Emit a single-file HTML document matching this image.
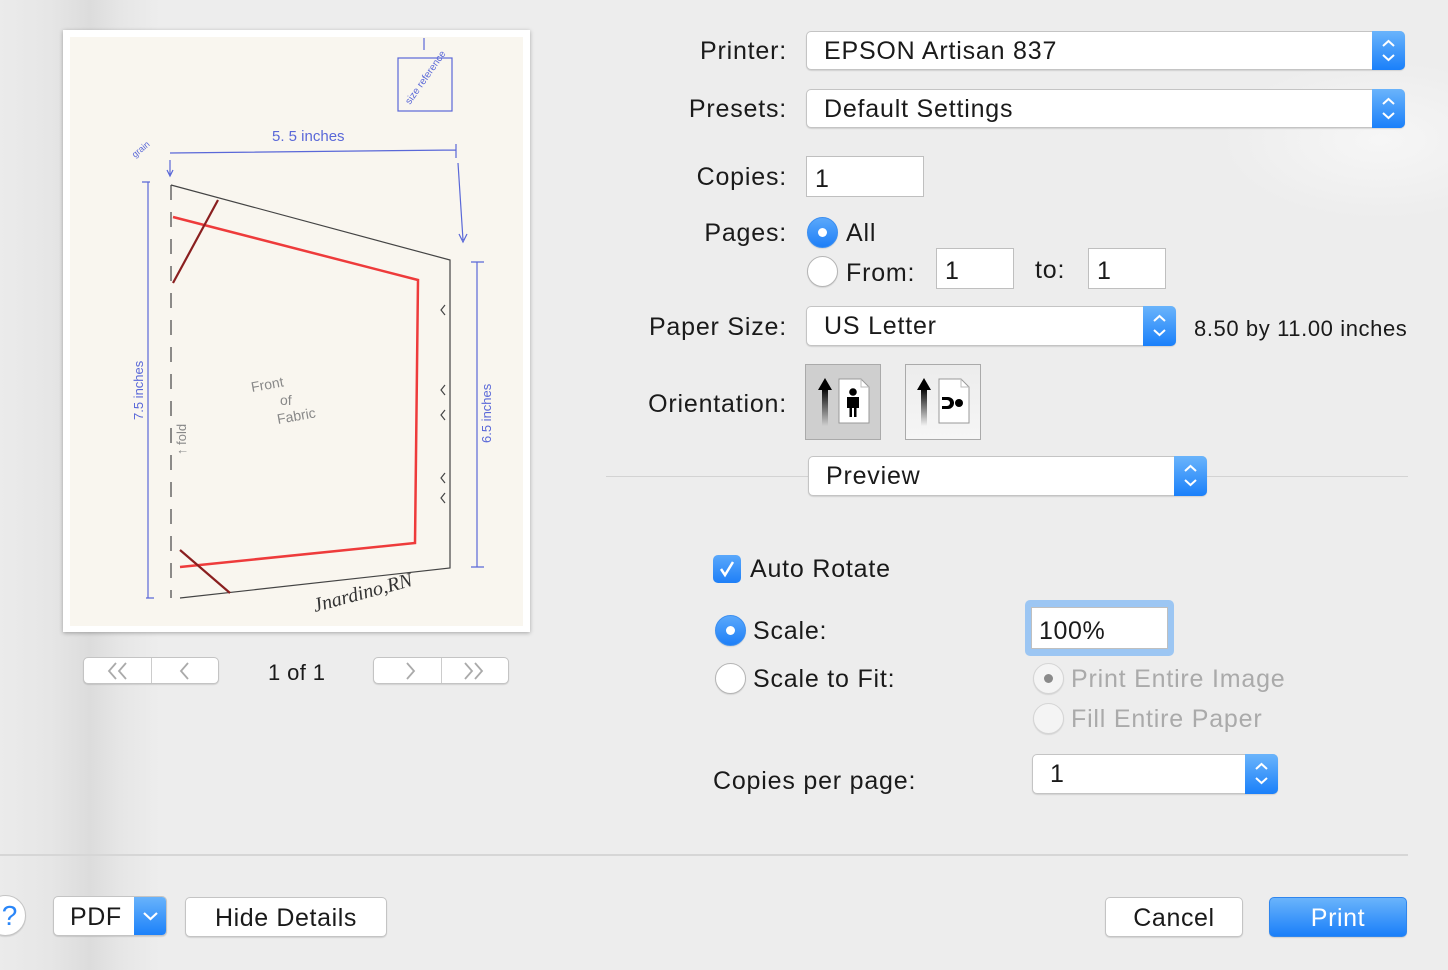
<!DOCTYPE html>
<html><head><meta charset="utf-8"><style>
*{box-sizing:border-box;margin:0;padding:0}
body{width:1448px;height:970px;overflow:hidden;background:#ededed;font-family:"Liberation Sans",Helvetica,Arial,sans-serif;color:#1a1a1a;position:relative}
.a{position:absolute}
.lbl{position:absolute;font-size:25px;text-align:right;width:400px;line-height:32px;letter-spacing:0.8px}
.pop{position:absolute;background:#fff;border:1px solid #c4c4c4;border-radius:5px;box-shadow:0 1px 1px rgba(0,0,0,.12);font-size:25px;line-height:39px;padding-left:17px;letter-spacing:0.8px}
.step{position:absolute;right:-1px;top:-1px;bottom:-1px;width:33px;border-radius:0 5px 5px 0;background:linear-gradient(#6ab4fb,#1a80fa)}
.fld{position:absolute;background:#fff;border:1px solid #bfbfbf;font-size:25px;line-height:40px;padding-left:8px;letter-spacing:0.6px}
.rad{position:absolute;width:31px;height:31px;border-radius:50%;background:#fff;border:1px solid #b5b5b5;box-shadow:0 1px 1px rgba(0,0,0,.1)}
.rad.on{background:linear-gradient(#5aa8fb,#1e7ff7);border-color:#3b8ef0}
.rad.on:after{content:"";position:absolute;left:10px;top:10px;width:9px;height:9px;border-radius:50%;background:#fff}
.btn{position:absolute;background:#fff;border:1px solid #c4c4c4;border-radius:5px;box-shadow:0 1px 1px rgba(0,0,0,.12);font-size:25px;text-align:center;line-height:40px;letter-spacing:0.6px}
.t{position:absolute;font-size:25px;line-height:32px;letter-spacing:0.8px}
</style></head><body>
<div class="a" style="left:0;top:0;width:160px;height:970px;background:linear-gradient(90deg,#ebebeb 0,#e6e6e6 50px,#dcdcdc 90px,#e6e6e6 120px,#ededed 160px)"></div>
<div class="a" style="left:1220px;top:60px;width:228px;height:160px;background:radial-gradient(ellipse at 70% 50%,#f6f6f6,rgba(237,237,237,0) 70%)"></div>

<div class="a" style="left:63px;top:30px;width:467px;height:602px;background:#fff;box-shadow:0 1px 4px rgba(0,0,0,.3)"></div>
<div class="a" style="left:70px;top:37px;width:453px;height:589px;background:#f9f6ef"></div>
<svg class="a" style="left:0;top:0" width="560" height="640" viewBox="0 0 560 640" fill="none">
<g stroke="#5a68d8" stroke-width="1.2">
<rect x="398" y="58" width="54" height="53"/>
<line x1="424" y1="38" x2="424" y2="50"/>
<path d="M170 153 L456 150 M456 144 V158 M458 163 L463 240 M459 234 L463 242 L467 234 M170 160 V175 M167 170 L170 176 L173 170"/>
<path d="M148 182 V598 M142 182 H150 M146 598 H154 M477 262 V567 M471 262 H484 M471 567 H484"/>
</g>
<g fill="#5a68d8" font-family="Liberation Sans,sans-serif">
<text x="272" y="141" font-size="15">5. 5 inches</text>
<text transform="translate(143,420) rotate(-90)" font-size="13">7.5 inches</text>
<text transform="translate(491,443) rotate(-90)" font-size="13">6.5 inches</text>
<text transform="translate(410,105) rotate(-55)" font-size="10">size reference</text>
<text transform="translate(135,158) rotate(-40)" font-size="9">grain</text>
</g>
<g stroke="#444" stroke-width="1.2">
<path d="M171 185 L450 260 V568 L180 598"/>
<path d="M171 185 V598" stroke-dasharray="15 12"/>
<path d="M445 305 l-4 5 4 5 M445 385 l-4 5 4 5 M445 410 l-4 5 4 5 M445 473 l-4 5 4 5 M445 493 l-4 5 4 5"/>
</g>
<g stroke="#ee3b3b" stroke-width="2.5"><path d="M173 217 L418 280 L415 543 L180 567"/></g>
<g stroke="#8a1f1f" stroke-width="2.2"><path d="M173 283 L218 200 M180 550 L230 593"/></g>
<g fill="#888" font-family="Liberation Sans,sans-serif" font-size="14">
<text x="252" y="392" transform="rotate(-10 252 392)">Front</text><text x="280" y="405">of</text>
<text x="278" y="424" transform="rotate(-10 278 424)">Fabric</text>
<text transform="translate(186,455) rotate(-90)" font-size="13">↑ fold</text>
</g>
<text x="315" y="612" transform="rotate(-15 315 612)" font-family="Liberation Serif,serif" font-style="italic" font-size="20" fill="#333">Jnardino,RN</text>
</svg>

<div class="btn" style="left:83px;top:657px;width:136px;height:27px"><span class="a" style="left:67px;top:0;bottom:0;border-left:1px solid #ccc"></span>
<svg class="a" style="left:0;top:0" width="136" height="26" fill="none" stroke="#aaa" stroke-width="1.8"><path d="M32 5 l-7 8 7 8 M42 5 l-7 8 7 8 M104 5 l-7 8 7 8"/></svg></div>
<div class="btn" style="left:373px;top:657px;width:136px;height:27px"><span class="a" style="left:67px;top:0;bottom:0;border-left:1px solid #ccc"></span>
<svg class="a" style="left:0;top:0" width="136" height="26" fill="none" stroke="#aaa" stroke-width="1.8"><path d="M33 5 l7 8 -7 8 M91 5 l7 8 -7 8 M101 5 l7 8 -7 8"/></svg></div>
<div class="t" style="left:268px;top:657px;font-size:22px;letter-spacing:0.4px">1 of 1</div>

<div class="lbl" style="left:387px;top:35px">Printer:</div>
<div class="lbl" style="left:387px;top:93px">Presets:</div>
<div class="lbl" style="left:387px;top:161px">Copies:</div>
<div class="lbl" style="left:387px;top:217px">Pages:</div>
<div class="lbl" style="left:387px;top:311px">Paper Size:</div>
<div class="lbl" style="left:387px;top:388px">Orientation:</div>

<div class="pop" style="left:806px;top:31px;width:599px;height:39px">EPSON Artisan 837<div class="step"><svg width="33" height="38" viewBox="0 0 33 38" fill="none" stroke="#fff" stroke-width="2"><path d="M11 15 l5.5-5 5.5 5 M11 24 l5.5 5 5.5-5"/></svg></div></div>
<div class="pop" style="left:806px;top:89px;width:599px;height:39px">Default Settings<div class="step"><svg width="33" height="38" viewBox="0 0 33 38" fill="none" stroke="#fff" stroke-width="2"><path d="M11 15 l5.5-5 5.5 5 M11 24 l5.5 5 5.5-5"/></svg></div></div>
<div class="fld" style="left:806px;top:156px;width:118px;height:41px;line-height:44px">1</div>

<div class="rad on" style="left:807px;top:217px"></div><div class="t" style="left:846px;top:217px">All</div>
<div class="rad" style="left:807px;top:256px"></div><div class="t" style="left:846px;top:257px">From:</div>
<div class="fld" style="left:936px;top:248px;width:78px;height:41px;line-height:44px">1</div>
<div class="t" style="left:1035px;top:254px">to:</div>
<div class="fld" style="left:1088px;top:248px;width:78px;height:41px;line-height:44px">1</div>

<div class="pop" style="left:806px;top:306px;width:370px;height:40px">US Letter<div class="step"><svg width="33" height="39" viewBox="0 0 33 39" fill="none" stroke="#fff" stroke-width="2"><path d="M11 15 l5.5-5 5.5 5 M11 24 l5.5 5 5.5-5"/></svg></div></div>
<div class="t" style="left:1194px;top:313px;font-size:22px;letter-spacing:0.6px">8.50 by 11.00 inches</div>

<div class="a" style="left:805px;top:364px;width:76px;height:76px;border:1px solid #aaa;background:#cfcfcf"></div>
<div class="a" style="left:905px;top:364px;width:76px;height:76px;border:1px solid #aaa;background:linear-gradient(#ececec,#f6f6f6)"></div>
<svg class="a" style="left:805px;top:364px" width="180" height="76" viewBox="0 0 180 76">
<defs><linearGradient id="ar" x1="0" y1="0" x2="0" y2="1"><stop offset="0" stop-color="#000"/><stop offset="1" stop-color="#000" stop-opacity="0"/></linearGradient></defs>
<path d="M17 24 H23 V62 H17Z M116 24 H122 V62 H116Z" fill="url(#ar)"/>
<path d="M13 26 L20 14 L27 26Z M112 26 L119 14 L126 26Z"/>
<path d="M34 15 H56 L64 23 V59 H34Z M134 15 H156 L164 23 V59 H134Z" fill="#fff" stroke="#999"/>
<path d="M56 15 V23 H64 M156 15 V23 H164" fill="none" stroke="#bbb"/>
<circle cx="48" cy="28" r="3.8"/><path d="M42 33 H54 V44 H51.5 V53 H49 V44 H47 V53 H44.5 V44 H42Z"/>
<path d="M137 33 H143 A6 6 0 0 1 143 45 H137 V42 H142 A3 3 0 0 0 142 36 H137Z"/><circle cx="154" cy="39" r="4"/>
</svg>

<div class="a" style="left:606px;top:476px;width:802px;height:1px;background:#d3d3d3"></div>
<div class="pop" style="left:808px;top:456px;width:399px;height:40px">Preview<div class="step"><svg width="33" height="39" viewBox="0 0 33 39" fill="none" stroke="#fff" stroke-width="2"><path d="M11 15 l5.5-5 5.5 5 M11 24 l5.5 5 5.5-5"/></svg></div></div>

<div class="a" style="left:713px;top:555px;width:28px;height:28px;border-radius:5px;background:linear-gradient(#5aa8fb,#1e7ff7)"><svg width="28" height="28" viewBox="0 0 28 28" fill="none" stroke="#fff" stroke-width="2.5"><path d="M8 14 l4 6 8-13"/></svg></div>
<div class="t" style="left:750px;top:553px">Auto Rotate</div>

<div class="rad on" style="left:715px;top:615px"></div><div class="t" style="left:753px;top:615px">Scale:</div>
<div class="a" style="left:1025px;top:600px;width:149px;height:56px;border-radius:5px;background:#9cc6f3"></div>
<div class="fld" style="left:1031px;top:607px;width:137px;height:42px;line-height:46px;padding-left:7px">100%</div>
<div class="rad" style="left:715px;top:663px"></div><div class="t" style="left:753px;top:663px">Scale to Fit:</div>
<div class="rad" style="left:1033px;top:663px;border-color:#d5d5d5;background:#f4f4f4"><span class="a" style="left:10px;top:10px;width:9px;height:9px;border-radius:50%;background:#8a8a8a"></span></div>
<div class="t" style="left:1071px;top:663px;color:#aaa">Print Entire Image</div>
<div class="rad" style="left:1033px;top:703px;border-color:#d5d5d5;background:#f4f4f4"></div>
<div class="t" style="left:1071px;top:703px;color:#aaa">Fill Entire Paper</div>

<div class="t" style="left:713px;top:765px">Copies per page:</div>
<div class="pop" style="left:1032px;top:754px;width:246px;height:40px">1<div class="step"><svg width="33" height="39" viewBox="0 0 33 39" fill="none" stroke="#fff" stroke-width="2"><path d="M11 15 l5.5-5 5.5 5 M11 24 l5.5 5 5.5-5"/></svg></div></div>

<div class="a" style="left:0;top:854px;width:1408px;height:2px;background:#d6d6d6"></div>

<div class="a" style="left:-15px;top:895px;width:41px;height:41px;border-radius:50%;background:#fff;border:1px solid #c4c4c4;box-shadow:0 1px 1px rgba(0,0,0,.12);color:#2a86f8;font-size:28px;line-height:40px;text-align:center;padding-left:8px">?</div>
<div class="btn" style="left:53px;top:896px;width:114px;height:40px;text-align:left;padding-left:16px;overflow:hidden">PDF<div class="step" style="width:33px"><svg width="33" height="40" viewBox="0 0 33 40" fill="none" stroke="#fff" stroke-width="2.2"><path d="M10 17 l6.5 6 6.5-6"/></svg></div></div>
<div class="btn" style="left:185px;top:897px;width:202px;height:40px">Hide Details</div>
<div class="btn" style="left:1105px;top:897px;width:138px;height:40px">Cancel</div>
<div class="btn" style="left:1269px;top:897px;width:138px;height:40px;background:linear-gradient(#6ab4fb,#1a7ff9);border-color:#2f86ee;color:#fff">Print</div>
</body></html>
